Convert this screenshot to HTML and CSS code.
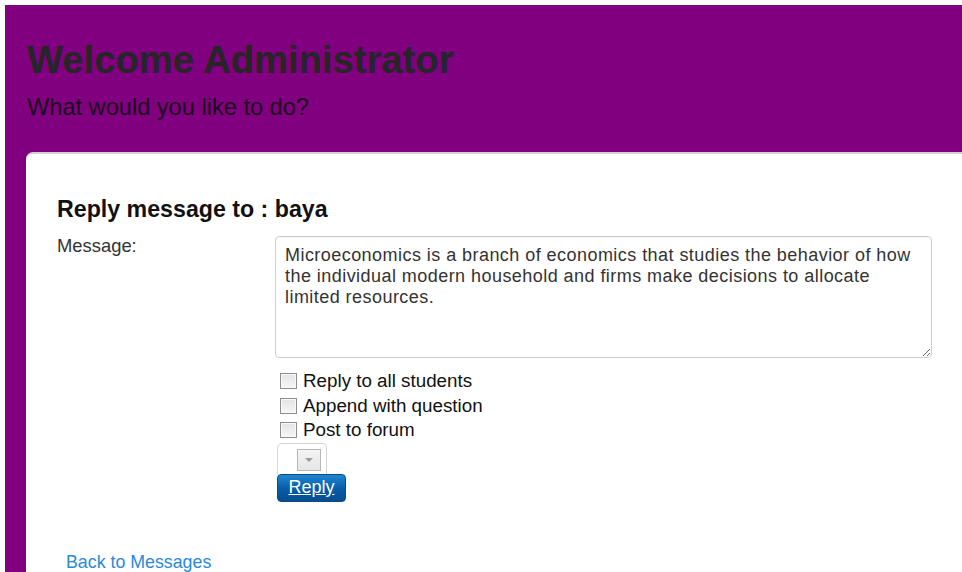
FILE: index.html
```html
<!DOCTYPE html>
<html lang="en">
<head>
<meta charset="utf-8">
<title>Reply message</title>
<link rel="stylesheet" href="styles.css">
</head>
<body>
<div class="frame">
  <header class="masthead">
    <h1 class="masthead-title">Welcome Administrator</h1>
    <p class="masthead-sub">What would you like to do?</p>
  </header>

  <main class="card">
    <h2 class="card-title">Reply message to : baya</h2>

    <form class="reply-form">
      <label class="field-label" for="msg">Message:</label>
      <div class="field-body">
        <textarea id="msg" class="msg-box">Microeconomics is a branch of economics that studies the behavior of how the individual modern household and firms make decisions to allocate limited resources.</textarea>

        <ul class="options">
          <li><label class="option"><input type="checkbox" class="tick"> Reply to all students</label></li>
          <li><label class="option"><input type="checkbox" class="tick"> Append with question</label></li>
          <li><label class="option"><input type="checkbox" class="tick"> Post to forum</label></li>
        </ul>

        <div class="picker">
          <span class="picker-btn"><span class="picker-caret"></span></span>
        </div>
        <button type="button" class="btn-reply">Reply</button>
      </div>
    </form>

    <a class="back-link" href="#">Back to Messages</a>
  </main>
</div>
</body>
</html>
```

FILE: styles.css
```css
html, body {
  margin: 0;
  padding: 0;
  background: #ffffff;
  overflow: hidden;
}

body {
  font-family: "Liberation Sans", Arial, sans-serif;
  color: #222;
}

/* purple page frame */
.frame {
  margin: 5px 0 0 5px;
  background: #800080;
  padding-left: 21px;
  height: 567px;
  display: flex;
  flex-direction: column;
}

.masthead {
  padding: 33px 0 0 1px;
}

.masthead-title {
  margin: 0;
  font-size: 38.2px;
  line-height: 44px;
  font-weight: bold;
  color: #262626;
}

.masthead-sub {
  margin: 11px 0 0;
  font-size: 23.6px;
  line-height: 28px;
  color: #1c0a1c;
}

/* white content card */
.card {
  margin-top: 31px;
  flex: 1;
  background: #fff;
  border-top: 2px solid #d0d0d0;
  border-top-left-radius: 7px;
  padding: 42px 0 0 31px;
}

.card-title {
  margin: 0;
  font-size: 23.2px;
  line-height: 26px;
  font-weight: bold;
  color: #111;
}

.reply-form {
  margin-top: 14px;
  display: grid;
  grid-template-columns: 218px 657px;
}

.field-label {
  font-size: 18.4px;
  line-height: 20px;
  color: #333;
}

.field-body {
  display: flex;
  flex-direction: column;
  align-items: flex-start;
}

.msg-box {
  box-sizing: border-box;
  width: 657px;
  height: 122px;
  margin: 0;
  padding: 8px 9px;
  border: 1px solid #cfcfcf;
  border-radius: 4px;
  box-shadow: inset 0 1px 2px rgba(0, 0, 0, 0.06);
  font-family: "Liberation Sans", Arial, sans-serif;
  font-size: 18px;
  letter-spacing: 0.45px;
  line-height: 21px;
  color: #333;
  resize: both;
}

.options {
  list-style: none;
  margin: 11px 0 0 5px;
  padding: 0;
}

.option {
  display: flex;
  align-items: center;
  gap: 6px;
  font-size: 18.8px;
  line-height: 24.5px;
  color: #111;
}

.tick {
  appearance: none;
  -webkit-appearance: none;
  margin: 0;
  width: 17px;
  height: 16px;
  border: 1px solid #8e8e8e;
  background: linear-gradient(#e4e4e4, #f6f6f6);
  box-shadow: inset 0 0 0 1px #f8f8f8;
}

/* small empty dropdown */
.picker {
  margin: 0 0 0 2px;
  width: 50px;
  height: 31px;
  box-sizing: border-box;
  border: 1px solid #d6d6d6;
  border-bottom: none;
  border-radius: 5px 5px 0 0;
  padding: 5px 0 0 19px;
}

.picker-btn {
  display: block;
  box-sizing: border-box;
  width: 24px;
  height: 22px;
  border: 1px solid #b8b8b8;
  background: linear-gradient(#f4f4f4, #e6e6e6);
  position: relative;
}

.picker-caret {
  position: absolute;
  left: 7px;
  top: 8px;
  border-left: 4px solid transparent;
  border-right: 4px solid transparent;
  border-top: 4px solid #9a9a9a;
}

.btn-reply {
  margin: 0 0 0 2px;
  width: 69px;
  height: 28px;
  border: 1px solid #0a4a80;
  border-radius: 4px;
  background: linear-gradient(#1f86d2, #075ba6 55%, #054f91);
  color: #fff;
  font-family: "Liberation Sans", Arial, sans-serif;
  font-size: 18px;
  text-decoration: underline;
  padding: 0;
  cursor: pointer;
}

.back-link {
  display: inline-block;
  margin: 50px 0 0 9px;
  font-size: 17.8px;
  line-height: 20px;
  color: #2a8ad8;
  text-decoration: none;
}
```
